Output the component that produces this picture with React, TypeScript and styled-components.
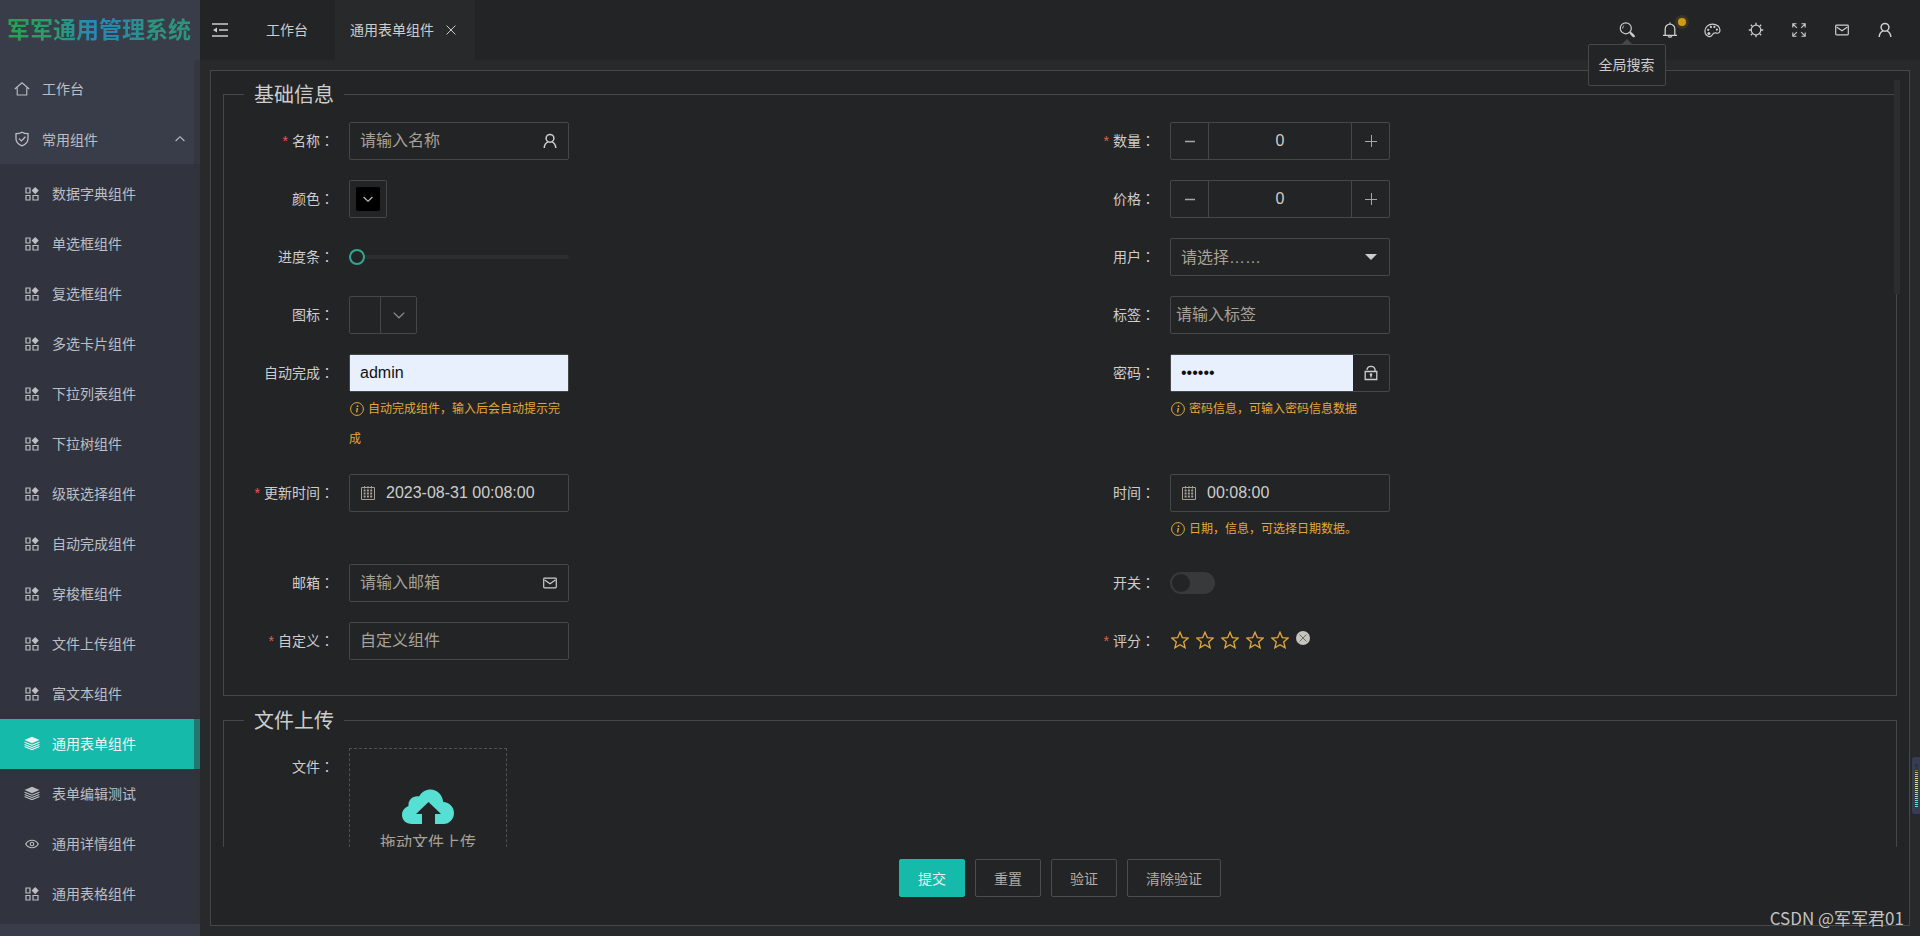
import React, { useState } from "react";
import styled, { createGlobalStyle, css } from "styled-components";

const c = {
  page: "#28292a",
  panel: "#232425",
  line: "#464748",
  side: "#393d49",
  sub: "#31343e",
  teal: "#16baaa",
  text: "#cdcdcd",
  dim: "#a8a296",
  warn: "#e2a83a",
};

const GlobalStyle = createGlobalStyle`
  *, *::before, *::after { box-sizing: border-box; }
  body {
    margin: 0;
    background: ${c.page};
    color: ${c.text};
    font: 14px/24px "Liberation Sans", "Noto Sans CJK SC", sans-serif;
    overflow: hidden;
  }
  button, input, select { font-family: inherit; color: inherit; }
  button { cursor: pointer; padding: 0; border: 0; background: none; }
  a { color: inherit; text-decoration: none; }
  ul { list-style: none; margin: 0; padding: 0; }
`;

/* ---------- icons ---------- */

const Svg = styled.svg.attrs<{ $size?: number }>({ "aria-hidden": true, fill: "none", stroke: "currentColor" })<{ $size?: number }>`
  flex: none;
  display: block;
  width: ${(p) => p.$size ?? 16}px;
  height: ${(p) => p.$size ?? 16}px;
`;

const HomeIcon = () => (
  <Svg viewBox="0 0 16 16"><path d="M.8 8 8 1.8 15.200 8M3.200 6.400V14h9.600V6.400" strokeWidth="1.100" /></Svg>
);
const ShieldIcon = () => (
  <Svg viewBox="0 0 16 16"><path d="M8 1.200c2 1.300 4 1.500 6 1.500v5.100c0 3.400-2.700 5.700-6 7-3.300-1.300-6-3.600-6-7V2.700c2 0 4-.2 6-1.500ZM5 7.600l2.400 2.300 4-4.200" strokeWidth="1.300" /></Svg>
);
const GridIcon = () => (
  <Svg viewBox="0 0 14 14" $size={14}>
    <path d="M1 1h4v5H1zM1 8.500h4v4.500H1zM8 8.500h5v4.500H8z" strokeWidth="1.200" />
    <path d="M10.200 0 13.800 3.600l-3.600 3.600-3.600-3.600z" fill="currentColor" stroke="none" />
  </Svg>
);
const LayersIcon = () => (
  <Svg viewBox="0 0 16 16">
    <path d="M8 .8 15.500 4 8 7.300.5 4z" fill="currentColor" stroke="none" />
    <path d="m.6 6.200 7.400 3 7.400-3M.6 8.400l7.400 3 7.400-3M.6 10.600l7.400 3 7.400-3" strokeWidth="1.100" />
  </Svg>
);
const EyeIcon = () => (
  <Svg viewBox="0 0 16 16" $size={14}>
    <path d="M.8 8C2.400 5.200 5 3.700 8 3.700S13.600 5.200 15.200 8c-1.600 2.800-4.200 4.300-7.200 4.300S2.400 10.800.8 8Z" strokeWidth="1.300" />
    <circle cx="8" cy="8" r="2" strokeWidth="1.300" />
  </Svg>
);
const FoldIcon = () => (
  <Svg viewBox="0 0 16 16"><path d="M0 2h16M7 8h9M0 14h16" strokeWidth="1.600" /><path d="m1 8 4-2.600v5.200z" fill="currentColor" stroke="none" /></Svg>
);
const CloseIcon = () => (
  <Svg viewBox="0 0 10 10" $size={10}><path d="m.6.6 8.800 8.800M9.400.6.600 9.400" strokeWidth="1" /></Svg>
);
const SearchIcon = () => (
  <Svg viewBox="0 0 16 16">
    <circle cx="6.800" cy="6.300" r="5.500" strokeWidth="1.200" />
    <path d="M3.600 6.600a3.200 3.200 0 0 1 1.600-3" strokeWidth=".9" />
    <path d="m10.800 10.200 1.200 1.200" strokeWidth="1.200" />
    <path d="m12 11.400 2.700 2.700" strokeWidth="2.400" strokeLinecap="round" />
  </Svg>
);
const BellIcon = () => (
  <Svg viewBox="0 0 16 16"><path d="M1 13.300h14M3.200 13.300V6.900a4.800 4.800 0 0 1 9.600 0v6.400M8 2V.6M6.200 14.200c.4 1.200 3.200 1.200 3.600 0" strokeWidth="1.300" /></Svg>
);
const PaletteIcon = () => (
  <Svg viewBox="0 0 18 16" $size={17}>
    <path d="M9 1.200c4.400 0 7.900 2.800 7.900 6.300 0 2.500-1.500 3.800-3.700 3.300-2-.5-3.300-.1-4 1.200-.8 1.700-2.500 2.700-4.500 2.200C2.500 13.500 1 11.300 1 8.600 1 4.400 4.500 1.200 9 1.200Z" strokeWidth="1.300" />
    <g fill="currentColor" stroke="none"><circle cx="4.500" cy="7.300" r="1.200" /><circle cx="7.300" cy="4.300" r="1.200" /><circle cx="11" cy="4.200" r="1.200" /><circle cx="13.700" cy="7" r="1.200" /><circle cx="5.200" cy="11.200" r="1.600" /></g>
  </Svg>
);
const SunIcon = () => (
  <Svg viewBox="0 0 16 16"><circle cx="8" cy="8" r="4.800" strokeWidth="1.200" /><path d="M8 3V.8M8 13v2.200M3 8H.8M13 8h2.200M4.600 4.600 2.800 2.800M11.400 4.600l1.800-1.800M4.600 11.400l-1.800 1.800M11.400 11.400l1.800 1.800" strokeWidth="1.300" /></Svg>
);
const FullIcon = () => (
  <Svg viewBox="0 0 16 16"><path d="M1.800 5.500V1.800h3.700M10.500 1.800h3.700v3.700M14.200 10.500v3.700h-3.700M5.500 14.200H1.800v-3.700M1.800 1.800 5.800 5.800M14.200 1.800l-4 4M14.200 14.200l-4-4M1.800 14.200l4-4" strokeWidth="1.100" /></Svg>
);
const MailIcon = () => (
  <Svg viewBox="0 0 16 16"><rect x="1.700" y="3.100" width="12.600" height="9.800" rx=".8" strokeWidth="1.200" /><path d="M2.600 5 8 8.700 13.400 5" strokeWidth="1.200" /></Svg>
);
const UserIcon = () => (
  <Svg viewBox="0 0 16 16"><circle cx="8" cy="5.300" r="3.900" strokeWidth="1.500" /><path d="M2.200 15c.2-3.200 1.600-5.300 4-6.100M13.800 15c-.2-3.200-1.600-5.300-4-6.100" strokeWidth="1.500" /></Svg>
);
const LockIcon = () => (
  <Svg viewBox="0 0 16 16"><path d="M2.200 6.500h11.600v8H2.200zM4 5V4.200C4.500 2.300 6 1.300 8 1.300s3.500 1 4 2.900V6.500M8 9v3.500" strokeWidth="1.300" /><circle cx="8" cy="9.600" r="1.300" fill="currentColor" stroke="none" /></Svg>
);
const CalendarIcon = () => (
  <Svg viewBox="0 0 16 16">
    <path d="M1.500 2.500h13v12h-13z" strokeWidth="1" />
    <path d="M3.600 5.500h9M3.600 8.500h9M3.600 11.500h9" strokeWidth="2" strokeDasharray="2 1.300" />
    <path d="M4.500 1v2.500M8 1v2.500M11.500 1v2.500" strokeWidth="1" />
  </Svg>
);
const Chevron = ({ up = false, size = 10 }: { up?: boolean; size?: number }) => (
  <Svg viewBox="0 0 10 10" $size={size}><path d={up ? "M.6 7 5 2.700 9.400 7" : "M.6 3 5 7.300 9.400 3"} strokeWidth="1.100" /></Svg>
);
const InfoIcon = () => (
  <InlineSvg viewBox="0 0 14 14" $size={14}><circle cx="7" cy="7" r="6.400" strokeWidth="1" /><circle cx="7.500" cy="4.200" r=".9" fill="currentColor" stroke="none" /><path d="M7.300 6 6.700 10.500" strokeWidth="1.400" /></InlineSvg>
);
const StarIcon = () => (
  <Svg viewBox="0 0 18 18" $size={18}><path d="m9 1.200 2.300 5.400 5.900.5-4.500 3.900 1.400 5.800L9 13.700l-5.100 3.100 1.400-5.800L.8 7.100l5.900-.5z" strokeWidth="1.300" /></Svg>
);
const CloudIcon = () => (
  <CloudSvg viewBox="0 0 52 36" aria-hidden><path d="M10 35C4 35 0 31 0 26c0-4 2.500-7.500 6.500-9C6 11 11 6.500 17 7.500 19.500 3 24 .5 28.500.5c6.500 0 12 5 12.700 12.500C47.500 13.500 52 18 52 24c0 6-4.500 11-10.500 11H33V25h6L26.500 13 14 25h6v10z" fill="#55e0d3" /></CloudSvg>
);

const InlineSvg = styled(Svg)`
  display: inline-block;
  vertical-align: middle;
  margin: -2px 4px 0 1px;
`;
const CloudSvg = styled.svg`
  width: 52px;
  height: 36px;
`;

/* ---------- shell ---------- */

const Shell = styled.div`
  display: grid;
  grid-template: 60px minmax(0, 1fr) / 200px minmax(0, 1fr);
  height: 100vh;
  position: relative;
`;
const Aside = styled.aside`
  grid-row: 1 / 3;
  background: ${c.side};
  overflow: hidden;
`;
const Logo = styled.h1`
  margin: 0;
  height: 60px;
  padding-left: 7px;
  font-size: 23px;
  line-height: 60px;
  font-weight: 700;
  white-space: nowrap;
  color: transparent;
  background: linear-gradient(90deg, #2a9f58 10%, #2a9a78 30%, #2688b8 48%, #2788ae 58%, #2b9580 75%, #2b9580) text;
`;
const Menu = styled.nav`
  padding-top: 4px;
  position: relative;
  &::after {
    content: "";
    position: absolute;
    inset: 0 0 0 auto;
    width: 6px;
    background: rgba(50, 50, 56, 0.5);
  }
`;
const itemBase = css`
  display: flex;
  align-items: center;
  width: 100%;
  height: 50px;
  font-size: 14px;
  color: #bcbec4;
`;
const TopItem = styled.a`
  ${itemBase}
  gap: 12px;
  padding-left: 14px;
`;
const GroupItem = styled.button`
  ${itemBase}
  gap: 12px;
  padding: 0 15px 0 14px;
  & > span { flex: 1; text-align: left; }
`;
const SubMenu = styled.ul`
  padding: 5px 0;
  background: ${c.sub};
`;
const SubItem = styled.a<{ $active?: boolean }>`
  ${itemBase}
  padding-left: 24px;
  ${(p) => p.$active && css`background: ${c.teal}; color: #f2f2f2;`}
`;
const IconSlot = styled.span`
  display: flex;
  justify-content: center;
  width: 16px;
  margin-right: 12px;
`;

const Header = styled.header`
  display: flex;
  align-items: stretch;
  background: ${c.panel};
  padding-right: 14px;
`;
const FoldButton = styled.button`
  display: flex;
  align-items: center;
  justify-content: center;
  width: 40px;
`;
const Tab = styled.a<{ $active?: boolean }>`
  display: flex;
  align-items: center;
  gap: 12px;
  padding: ${(p) => (p.$active ? "0 19px 0 15px" : "0 27px 0 26px")};
  background: ${(p) => (p.$active ? c.page : "transparent")};
`;
const Tools = styled.div`
  display: flex;
  margin-left: auto;
`;
const Tool = styled.button`
  position: relative;
  display: flex;
  align-items: center;
  justify-content: center;
  width: 43px;
`;
const Dot = styled.span`
  position: absolute;
  top: 18px;
  right: 5px;
  width: 8px;
  height: 8px;
  border-radius: 50%;
  background: #d09a12;
  box-shadow: 0 0 0 3px rgba(208, 154, 18, 0.14);
`;
const Tip = styled.span`
  position: absolute;
  z-index: 2;
  top: 44px;
  left: 50%;
  transform: translateX(-50%);
  padding: 8px 10px;
  border: 1px solid ${c.line};
  border-radius: 2px;
  background: ${c.panel};
  font-size: 14px;
  line-height: 24px;
  white-space: nowrap;
  &::before {
    content: "";
    position: absolute;
    left: 50%;
    top: -6px;
    margin-left: -5px;
    border: 5px solid transparent;
    border-top: 0;
    border-bottom-color: ${c.line};
  }
`;

/* ---------- form ---------- */

const Main = styled.main`
  display: flex;
  padding: 10px;
  min-height: 0;
`;
const Card = styled.form`
  display: flex;
  flex-direction: column;
  flex: 1;
  min-width: 0;
  border: 1px solid ${c.line};
  background: ${c.panel};
  padding: 9px 9px 28px 12px;
`;
const Scroller = styled.div`
  position: relative;
  flex: 1;
  min-height: 0;
  padding-right: 3px;
  overflow: hidden;
`;
const ScrollThumb = styled.span`
  position: absolute;
  top: 0;
  right: 0;
  width: 6px;
  height: 214px;
  background: #2c2d2e;
`;
const Group = styled.fieldset`
  min-width: 0;
  margin: 0 0 10px;
  padding: 14px 15px 15px;
  border: 1px solid ${c.line};
`;
const Legend = styled.legend`
  margin-left: 5px;
  padding: 2px 10px 0;
  font-size: 20px;
  line-height: 26px;
`;
const Columns = styled.div`
  display: grid;
  grid-template-columns: 1fr 1fr;
  row-gap: 20px;
  padding-bottom: 20px;
`;
const Field = styled.div`
  display: flex;
`;
const Label = styled.label`
  width: 110px;
  height: 38px;
  padding-right: 15px;
  font-size: 14px;
  line-height: 38px;
  text-align: right;
  white-space: nowrap;
`;
const Star = styled.span`
  margin-right: 4px;
  color: #e0604a;
`;
const Colon = styled.span`
  font-family: "Noto Sans CJK JP", sans-serif;
  line-height: 1;
`;
const Control = styled.div`
  width: 220px;
`;
const Box = styled.div`
  display: flex;
  align-items: center;
  height: 38px;
  border: 1px solid ${c.line};
  border-radius: 2px;
`;
const TextInput = styled.input<{ $filled?: boolean; $tight?: boolean }>`
  flex: 1;
  min-width: 0;
  height: 100%;
  padding: 0 0 0 ${(p) => (p.$tight ? 5 : 10)}px;
  border: 0;
  outline: 0;
  font-size: 16px;
  background: ${(p) => (p.$filled ? "#e8f0fe" : "transparent")};
  color: ${(p) => (p.$filled ? "#111" : c.text)};
  &::placeholder { color: ${c.dim}; opacity: 1; }
`;
const Adorn = styled.span<{ $left?: boolean }>`
  display: flex;
  justify-content: center;
  width: 36px;
  ${(p) => p.$left && css`width: 26px; padding-left: 10px; color: ${c.dim};`}
`;
const Step = styled.button<{ $side: "left" | "right" }>`
  display: flex;
  align-items: center;
  justify-content: center;
  width: 38px;
  height: 100%;
  color: #a9a5a0;
  border-${(p) => (p.$side === "left" ? "right" : "left")}: 1px solid ${c.line};
`;
const NumberInput = styled(TextInput)`
  padding: 0;
  text-align: center;
`;
const Select = styled.select`
  flex: 1;
  height: 100%;
  padding: 0 0 0 10px;
  border: 0;
  outline: 0;
  appearance: none;
  background: transparent;
  font-size: 16px;
  color: ${c.dim};
`;
const Caret = styled.span`
  margin-right: 12px;
  border: 6px solid transparent;
  border-bottom: 0;
  border-top-color: ${c.text};
`;
const Hint = styled.p`
  margin: 2px 0 0;
  font-size: 12px;
  line-height: 30px;
  color: ${c.warn};
`;
const ColorButton = styled.button`
  display: flex;
  width: 38px;
  height: 38px;
  padding: 6px;
  border: 1px solid ${c.line};
  border-radius: 2px;
`;
const Swatch = styled.span`
  display: flex;
  align-items: center;
  justify-content: center;
  flex: 1;
  height: 24px;
  border-radius: 2px;
  background: #000;
`;
const IconPicker = styled.button`
  display: flex;
  width: 68px;
  height: 38px;
  border: 1px solid ${c.line};
  border-radius: 2px;
  color: #8a8a8a;
`;
const PickCell = styled.span<{ $arrow?: boolean }>`
  display: flex;
  align-items: center;
  justify-content: center;
  height: 100%;
  flex: 1;
  ${(p) => p.$arrow && css`flex: none; width: 36px; border-left: 1px solid ${c.line};`}
`;
const Range = styled.input`
  appearance: none;
  display: block;
  width: 220px;
  height: 38px;
  margin: 0;
  background: transparent;
  &::-webkit-slider-runnable-track { height: 4px; border-radius: 2px; background: #2d2e2f; }
  &::-webkit-slider-thumb {
    appearance: none;
    width: 16px;
    height: 16px;
    margin-top: -6px;
    border: 2px solid #33a693;
    border-radius: 50%;
    background: ${c.panel};
  }
`;
const Switch = styled.input`
  appearance: none;
  display: flex;
  align-items: center;
  width: 45px;
  height: 22px;
  margin: 8px 0;
  padding: 0 2px;
  border-radius: 11px;
  background: #37393a;
  &::before {
    content: "";
    width: 18px;
    height: 18px;
    border-radius: 50%;
    background: #232425;
  }
  &:checked { justify-content: flex-end; background: ${c.teal}; }
`;
const Rate = styled.div`
  display: flex;
  align-items: center;
  gap: 7px;
  height: 36px;
  padding-left: 1px;
  color: ${c.warn};
`;
const Clear = styled.button`
  display: flex;
  align-items: center;
  justify-content: center;
  width: 14px;
  height: 14px;
  margin-bottom: 4px;
  border-radius: 50%;
  background: #c6c4bf;
  color: #55534f;
  & svg { width: 8px; height: 8px; }
`;
const Upload = styled.button`
  display: flex;
  flex-direction: column;
  align-items: center;
  width: 158px;
  height: 150px;
  padding-top: 40px;
  border: 1px dashed #505152;
  color: ${c.dim};
  font-size: 16px;
  line-height: 24px;
  & > span { margin-top: 6px; }
`;
const Footer = styled.footer`
  display: flex;
  justify-content: center;
  gap: 10px;
  padding: 12px 3px 0 0;
`;
const Button = styled.button<{ $primary?: boolean }>`
  height: 38px;
  padding: 0 18px;
  border: 1px solid ${(p) => (p.$primary ? c.teal : "#4c4d4e")};
  border-radius: 2px;
  font-size: 14px;
  background: ${(p) => (p.$primary ? c.teal : "transparent")};
  color: ${(p) => (p.$primary ? "#e8efee" : "#b3aca4")};
  min-width: 66px;
`;

const Meter = styled.div`
  position: absolute;
  z-index: 3;
  right: 0;
  bottom: 121px;
  width: 9px;
  height: 59px;
  padding: 7px 2px 6px 3px;
  border: 1px solid #24263a;
  border-right: 0;
  border-radius: 3px 0 0 3px;
  background: #363c52;
`;
const MeterBars = styled.div`
  height: 100%;
  background:
    repeating-linear-gradient(#0000 0 1px, #33384c 1px 2px),
    linear-gradient(#22263a, #3a3440 12%, #f0b060 20%, #e8e088 45%, #a8e088 65%, #58e0d0 90%);
`;
const Watermark = styled.div`
  position: absolute;
  z-index: 3;
  right: 16px;
  bottom: 6px;
  font-family: "Noto Sans CJK SC", sans-serif;
  font-size: 17px;
  line-height: 24px;
  color: #c2c2c2;
`;

const menu = [
  ["数据字典组件", GridIcon], ["单选框组件", GridIcon], ["复选框组件", GridIcon], ["多选卡片组件", GridIcon],
  ["下拉列表组件", GridIcon], ["下拉树组件", GridIcon], ["级联选择组件", GridIcon], ["自动完成组件", GridIcon],
  ["穿梭框组件", GridIcon], ["文件上传组件", GridIcon], ["富文本组件", GridIcon], ["通用表单组件", LayersIcon],
  ["表单编辑测试", LayersIcon], ["通用详情组件", EyeIcon], ["通用表格组件", GridIcon],
] as const;

type RowProps = { id: string; label: string; required?: boolean; hint?: string; children: React.ReactNode };
const Row = ({ id, label, required, hint, children }: RowProps) => (
  <Field>
    <Label htmlFor={id}>{required && <Star>*</Star>}{label}<Colon>：</Colon></Label>
    <Control>
      {children}
      {hint && <Hint><InfoIcon />{hint}</Hint>}
    </Control>
  </Field>
);

const Stepper = ({ id }: { id: string }) => {
  const [n, setN] = useState(0);
  return (
    <Box>
      <Step type="button" $side="left" aria-label="减少" onClick={() => setN(n - 1)}>
        <Svg viewBox="0 0 12 12" $size={12}><path d="M1 6.500h10" strokeWidth="1.500" /></Svg>
      </Step>
      <NumberInput id={id} value={n} onChange={(e) => setN(Number(e.target.value) || 0)} />
      <Step type="button" $side="right" aria-label="增加" onClick={() => setN(n + 1)}>
        <Svg viewBox="0 0 12 12" $size={12}><path d="M0 6.500h12M6.500 0v12" strokeWidth="1" /></Svg>
      </Step>
    </Box>
  );
};

export default function App() {
  return (
    <Shell>
      <GlobalStyle />
      <Aside>
        <Logo>军军通用管理系统</Logo>
        <Menu>
          <TopItem href="#home"><HomeIcon /><span>工作台</span></TopItem>
          <GroupItem type="button"><ShieldIcon /><span>常用组件</span><Chevron up /></GroupItem>
          <SubMenu>
            {menu.map(([name, Icon]) => (
              <li key={name}>
                <SubItem href={`#${name}`} $active={name === "通用表单组件"}>
                  <IconSlot><Icon /></IconSlot>{name}
                </SubItem>
              </li>
            ))}
          </SubMenu>
        </Menu>
      </Aside>

      <Header>
        <FoldButton type="button" aria-label="收起菜单"><FoldIcon /></FoldButton>
        <Tab href="#home">工作台</Tab>
        <Tab href="#form" $active>通用表单组件<CloseIcon /></Tab>
        <Tools>
          <Tool type="button"><SearchIcon /><Tip role="tooltip">全局搜索</Tip></Tool>
          <Tool type="button" aria-label="通知"><BellIcon /><Dot /></Tool>
          <Tool type="button" aria-label="主题"><PaletteIcon /></Tool>
          <Tool type="button" aria-label="亮度"><SunIcon /></Tool>
          <Tool type="button" aria-label="全屏"><FullIcon /></Tool>
          <Tool type="button" aria-label="消息"><MailIcon /></Tool>
          <Tool type="button" aria-label="用户"><UserIcon /></Tool>
        </Tools>
      </Header>

      <Main>
        <Card onSubmit={(e) => e.preventDefault()}>
          <Scroller>
            <Group>
              <Legend>基础信息</Legend>
              <Columns>
                <Row id="name" label="名称" required>
                  <Box><TextInput id="name" placeholder="请输入名称" /><Adorn><UserIcon /></Adorn></Box>
                </Row>
                <Row id="count" label="数量" required><Stepper id="count" /></Row>
                <Row id="color" label="颜色">
                  <ColorButton id="color" type="button"><Swatch><Chevron /></Swatch></ColorButton>
                </Row>
                <Row id="price" label="价格"><Stepper id="price" /></Row>
                <Row id="progress" label="进度条"><Range id="progress" type="range" defaultValue={0} /></Row>
                <Row id="user" label="用户">
                  <Box><Select id="user"><option>请选择……</option></Select><Caret /></Box>
                </Row>
                <Row id="icon" label="图标">
                  <IconPicker id="icon" type="button"><PickCell /><PickCell $arrow><Chevron size={12} /></PickCell></IconPicker>
                </Row>
                <Row id="tag" label="标签"><Box><TextInput id="tag" $tight placeholder="请输入标签" /></Box></Row>
                <Row id="auto" label="自动完成" hint="自动完成组件，输入后会自动提示完成">
                  <Box><TextInput id="auto" $filled defaultValue="admin" /></Box>
                </Row>
                <Row id="password" label="密码" hint="密码信息，可输入密码信息数据">
                  <Box><TextInput id="password" $filled type="password" defaultValue="123456" /><Adorn><LockIcon /></Adorn></Box>
                </Row>
                <Row id="updated" label="更新时间" required>
                  <Box><Adorn $left><CalendarIcon /></Adorn><TextInput id="updated" defaultValue="2023-08-31 00:08:00" /></Box>
                </Row>
                <Row id="time" label="时间" hint="日期，信息，可选择日期数据。">
                  <Box><Adorn $left><CalendarIcon /></Adorn><TextInput id="time" defaultValue="00:08:00" /></Box>
                </Row>
                <Row id="mail" label="邮箱">
                  <Box><TextInput id="mail" placeholder="请输入邮箱" /><Adorn><MailIcon /></Adorn></Box>
                </Row>
                <Row id="switch" label="开关"><Switch id="switch" type="checkbox" role="switch" /></Row>
                <Row id="custom" label="自定义" required><Box><TextInput id="custom" placeholder="自定义组件" /></Box></Row>
                <Row id="rate" label="评分" required>
                  <Rate>
                    {[1, 2, 3, 4, 5].map((n) => (
                      <button key={n} id={n === 1 ? "rate" : undefined} type="button" aria-label={`${n} 星`}><StarIcon /></button>
                    ))}
                    <Clear type="button" aria-label="清除评分"><CloseIcon /></Clear>
                  </Rate>
                </Row>
              </Columns>
            </Group>
            <Group>
              <Legend>文件上传</Legend>
              <Columns>
                <Row id="file" label="文件">
                  <Upload id="file" type="button"><CloudIcon /><span>拖动文件上传</span></Upload>
                </Row>
              </Columns>
            </Group>
            <ScrollThumb />
          </Scroller>
          <Footer>
            <Button type="submit" $primary>提交</Button>
            <Button type="reset">重置</Button>
            <Button type="button">验证</Button>
            <Button type="button">清除验证</Button>
          </Footer>
        </Card>
      </Main>

      <Meter><MeterBars /></Meter>
      <Watermark>CSDN @军军君01</Watermark>
    </Shell>
  );
}
